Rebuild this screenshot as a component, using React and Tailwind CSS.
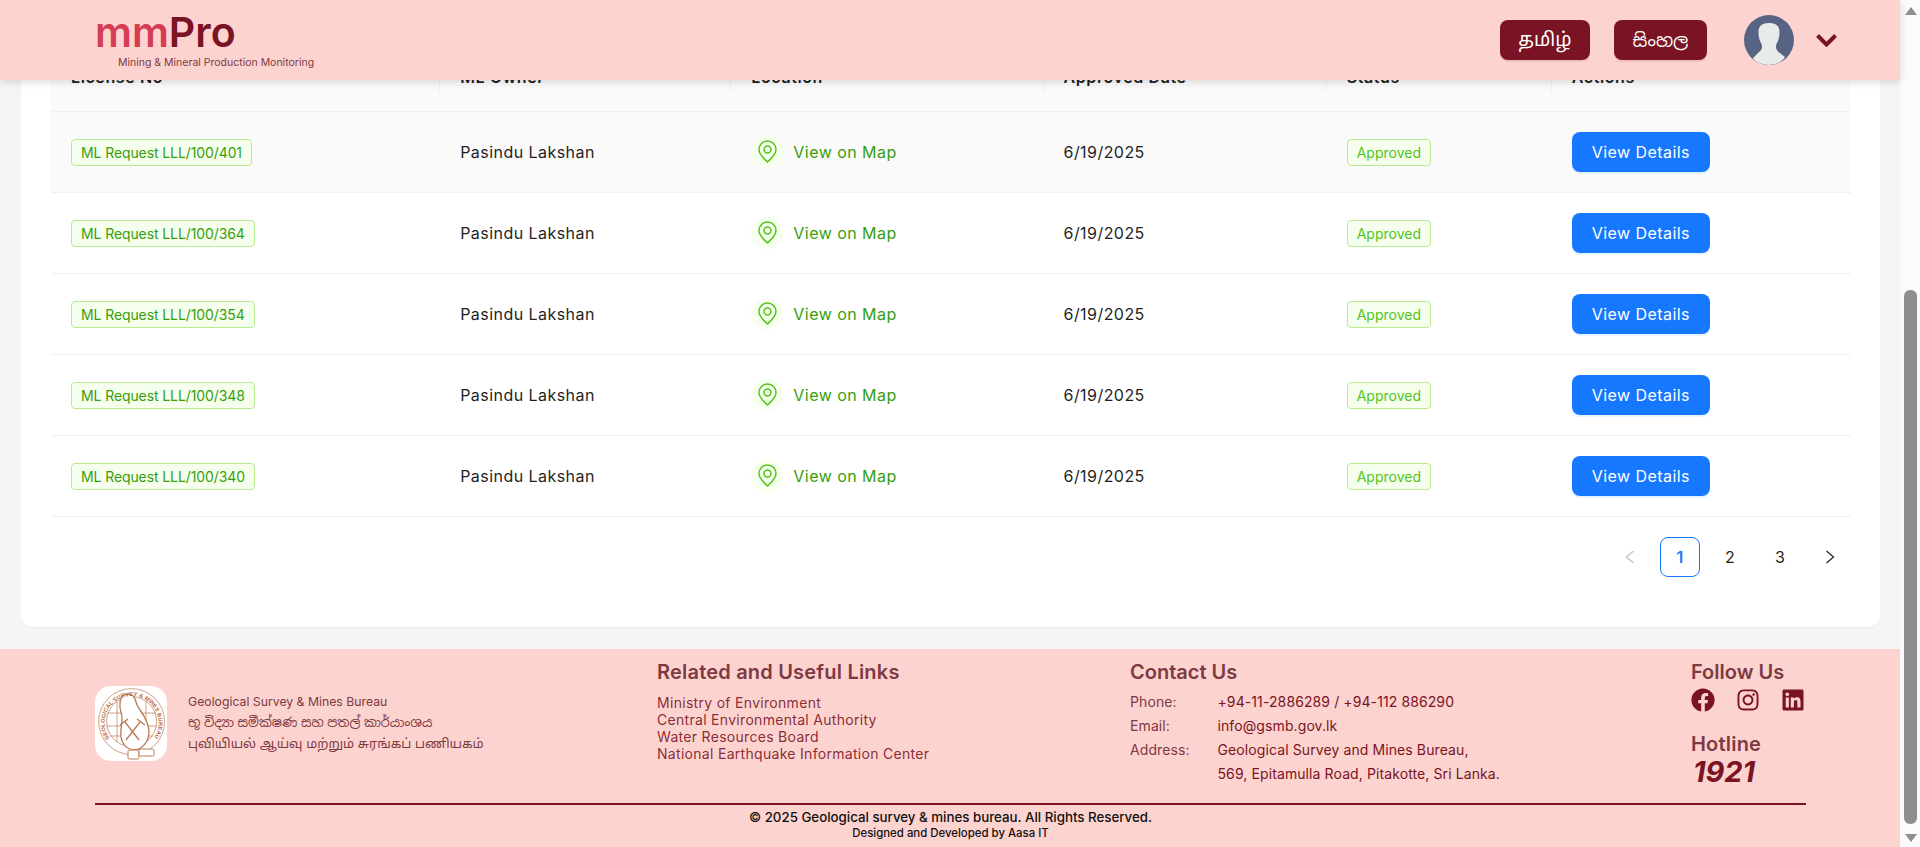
import React from "react";
import { FaFacebook, FaLinkedin, FaInstagram } from "react-icons/fa";

const rows = ["401", "364", "354", "348", "340"];
const heads = ["License No", "ML Owner", "Location", "Approved Date", "Status", "Actions"];

function Seal() {
  return (
    <svg viewBox="0 0 72 75" className="w-[72px] h-[75px]">
      <defs>
        <path id="ringText" d="M 14.5 52.5 A 27 27 0 1 1 58.7 52.5" fill="none" />
      </defs>
      <g fill="none" stroke="#bb7a55" strokeWidth="0.7">
        <circle cx="36.6" cy="35.6" r="33" />
        <circle cx="36.6" cy="35.6" r="25" />
        <path d="M12.5 27H61M11.5 40H62M15 50H58M22 15V56M31 11V60M51 15V56" />
        <path d="M29 9c4-2 9-1 11 4 1 4 2 7 5 11 5 7 9 14 9 22 0 10-7 17-14 18-8 0-13-6-14-13-1-7 1-12 1-18 0-7-3-10-2-15 0-4 1-7 4-9z" fill="#fff" strokeWidth="1.3" />
        <path d="M30 36l14 18M45 36L31 54M25 39l8-6M50 39l-8-6" strokeWidth="1.3" />
        <rect x="33" y="64" width="11" height="9" rx="1.5" fill="#fff" strokeWidth="1" />
        <rect x="44" y="63" width="15" height="7" rx="1.5" fill="#fff" strokeWidth="1" />
      </g>
      <text fill="#b5693f" fontSize="5.6" fontFamily="'Liberation Sans',sans-serif" fontWeight="700">
        <textPath href="#ringText" textLength="116" lengthAdjust="spacing">GEOLOGICAL SURVEY &amp; MINES BUREAU</textPath>
      </text>
    </svg>
  );
}

function Avatar() {
  return (
    <svg viewBox="0 0 50 50" className="w-[50px] h-[50px] rounded-full">
      <rect width="50" height="50" fill="#566383" />
      <path d="M25 8c7 0 10.500 3 10.500 9 0 6-1.500 9-3 12-1 3-.5 6 2 8l6.500 5c-3 5-9 8-16 8s-13-2-16-7l6-6c3-2 3.500-5 2.500-8-1.500-3-3-6-3-12 0-6 3.500-9 10.500-9z" fill="#e7eceb" />
    </svg>
  );
}

function Pin() {
  return (
    <svg width="19" height="23" viewBox="0 0 19 23" fill="none" stroke="#52c41a" strokeWidth="1.5">
      <path d="M9.500 22C8 20.500 1 15 1 9.500a8.500 8.500 0 0 1 17 0C18 15 11 20.500 9.500 22z" strokeLinejoin="round" />
      <circle cx="9.500" cy="9.500" r="3.500" />
    </svg>
  );
}

function Tag({ children, light }) {
  return (
    <span className={`inline-flex items-center h-[27px] px-[9px] rounded-[4px] border border-[#b7eb8f] bg-[#f6ffed] text-[14px] leading-none whitespace-nowrap ${light ? "tracking-normal text-[#52c41a]" : "tracking-[-0.1px] text-[#389e0d]"}`}>
      {children}
    </span>
  );
}

function Scrollbar() {
  return (
    <div className="w-5 shrink-0 h-full bg-[#fbfbfb] flex flex-col pl-[4px] pr-[3px]">
      <div className="h-[22px] flex items-center justify-center">
        <div className="w-0 h-0 border-x-[6.500px] border-x-transparent border-b-[8px] border-b-[#8e8e8e]" />
      </div>
      <div className="mt-[268px] h-[534px] bg-[#8e8e8e] rounded-[6px]" />
      <div className="flex-1 flex items-end justify-center pb-[5px]">
        <div className="w-0 h-0 border-x-[6.500px] border-x-transparent border-t-[8px] border-t-[#8e8e8e]" />
      </div>
    </div>
  );
}

const sans = "font-['Inter','Noto_Sans_Tamil','Noto_Sans_Sinhala',sans-serif]";

export default function App() {
  return (
    <div className={`flex h-screen w-full overflow-hidden bg-[#f5f5f5] ${sans}`}>
      <div className="relative flex-1 min-w-0 h-full flex flex-col">
        <header className="absolute top-0 inset-x-0 z-10 h-20 bg-[#fdd3cf] shadow-[0_2px_8px_rgba(0,0,0,0.15)] flex items-center pl-[95px] pr-[63px]">
          <div className="flex flex-col self-start pt-[12px]">
            <div className="text-[41px] leading-[40px] font-semibold">
              <span className="text-[#d63d55]">mm</span><span className="text-[#7a1324]">Pro</span>
            </div>
            <div className="ml-[23px] mt-[4px] text-[10.500px] leading-[14px] text-[#7d3a44] whitespace-nowrap">Mining &amp; Mineral Production Monitoring</div>
          </div>
          <div className="ml-auto flex items-center">
            <button className="w-[90px] h-10 rounded-lg bg-[#7a1324] text-white text-[19px] shadow-[0_2px_0_rgba(122,19,36,0.1)]">தமிழ்</button>
            <button className="ml-6 w-[93px] h-10 rounded-lg bg-[#7a1324] text-white text-[18px] shadow-[0_2px_0_rgba(122,19,36,0.1)]">සිංහල</button>
            <div className="ml-[37px]"><Avatar /></div>
            <svg width="21" height="13" viewBox="0 0 21 13" fill="none" stroke="#7a1324" strokeWidth="4" className="ml-[22px]">
              <path d="M1.500 1.500l9 9 9-9" />
            </svg>
          </div>
        </header>

        <main className="pl-[21px] pr-5 h-[649px] shrink-0">
          <div className="h-[627px] bg-white rounded-b-[12px] pt-[41px] pl-[30px] pr-[29px] shadow-[0_1px_2px_rgba(0,0,0,0.04)]">
            <table className="w-full table-fixed border-collapse text-[16px] tracking-[0.45px] text-[#1f1f1f]">
              <colgroup>
                <col className="w-[389px]" /><col className="w-[291px]" /><col className="w-[312px]" /><col className="w-[283px]" /><col className="w-[225px]" /><col className="w-[299px]" />
              </colgroup>
              <thead>
                <tr className="h-[70px] bg-[#fafafa] border-b border-[#f0f0f0]">
                  {heads.map((h, i) => (
                    <th key={h} className="relative px-5 pt-[3px] text-left font-semibold tracking-[0.6px]">
                      {h}
                      {i < 5 && <span className="absolute right-0 top-[19px] h-[32px] w-px bg-[#f0f0f0]" />}
                    </th>
                  ))}
                </tr>
              </thead>
              <tbody>
                {rows.map((r, i) => (
                  <tr key={r} className={`h-[81px] border-b border-[#f0f0f0] ${i === 0 ? "bg-[#fafafa]" : ""}`}>
                    <td className="px-5 pt-[2px]"><Tag>ML Request LLL/100/{r}</Tag></td>
                    <td className="px-5">Pasindu Lakshan</td>
                    <td className="px-5">
                      <div className="flex items-center gap-[10px] text-[#389e0d]">
                        <span className="w-8 h-8 rounded-full bg-[#f6ffed] flex items-center justify-center"><Pin /></span>
                        View on Map
                      </div>
                    </td>
                    <td className="px-5">6/19/2025</td>
                    <td className="px-5 pt-[2px]"><Tag light>Approved</Tag></td>
                    <td className="px-5">
                      <button className="w-[138px] h-10 rounded-lg bg-[#1677ff] text-white shadow-[0_2px_0_rgba(5,145,255,0.1)]">View Details</button>
                    </td>
                  </tr>
                ))}
              </tbody>
            </table>
            <nav className="mt-5 mr-px flex justify-end gap-[10px] text-[16px] text-[#1f1f1f]">
              <span className="w-10 h-10 flex items-center justify-center">
                <svg width="10" height="14" viewBox="0 0 10 14" fill="none" stroke="#c4c4c4" strokeWidth="1.400"><path d="M8.500 1L1.500 7l7 6" /></svg>
              </span>
              <span className="w-10 h-10 flex items-center justify-center rounded-lg border border-[#1677ff] text-[#1677ff] font-semibold">1</span>
              <span className="w-10 h-10 flex items-center justify-center">2</span>
              <span className="w-10 h-10 flex items-center justify-center">3</span>
              <span className="w-10 h-10 flex items-center justify-center">
                <svg width="10" height="14" viewBox="0 0 10 14" fill="none" stroke="#333" strokeWidth="1.400"><path d="M1.500 1l7 6-7 6" /></svg>
              </span>
            </nav>
          </div>
        </main>

        <footer className="flex-1 bg-[#fdd3cf] pl-[95px] pr-[94px] flex flex-col">
          <div className="h-[156px] flex shrink-0 border-b-2 border-[#7a1324]">
            <div className="w-[562px] shrink-0 flex items-start pt-[37px]">
              <div className="w-[72px] h-[75px] bg-white rounded-[16px] flex items-center justify-center overflow-hidden"><Seal /></div>
              <div className="ml-[21px] pt-[5px] text-[#7d3a44]">
                <div className="text-[12.250px] leading-[21px]">Geological Survey &amp; Mines Bureau</div>
                <div className="text-[12.800px] leading-[21px]">භූ විද්‍යා සමීක්ෂණ සහ පතල් කාර්යාංශය</div>
                <div className="text-[12.900px] leading-[21px]">புவியியல் ஆய்வு மற்றும் சுரங்கப் பணியகம்</div>
              </div>
            </div>
            <div className="w-[473px] shrink-0 pt-[10px]">
              <h3 className="text-[20px] leading-[26px] font-semibold tracking-[0.2px] text-[#7d3a44]">Related and Useful Links</h3>
              <ul className="mt-[9px] text-[14px] leading-[17px] tracking-[0.3px] text-[#7a1324]/90">
                <li>Ministry of Environment</li>
                <li>Central Environmental Authority</li>
                <li>Water Resources Board</li>
                <li>National Earthquake Information Center</li>
              </ul>
            </div>
            <div className="w-[561px] shrink-0 pt-[10px]">
              <h3 className="text-[20px] leading-[26px] font-semibold text-[#7d3a44]">Contact Us</h3>
              <dl className="mt-[5px] grid grid-cols-[87.500px_1fr] text-[14px] leading-[24px] tracking-[0.1px]">
                <dt className="text-[#7d3a44]">Phone:</dt><dd className="text-[#7a1324]">+94-11-2886289 / +94-112 886290</dd>
                <dt className="text-[#7d3a44]">Email:</dt><dd className="text-[#7a1324]">info@gsmb.gov.lk</dd>
                <dt className="text-[#7d3a44]">Address:</dt><dd className="text-[#7a1324]">Geological Survey and Mines Bureau,<br />569, Epitamulla Road, Pitakotte, Sri Lanka.</dd>
              </dl>
            </div>
            <div className="flex-1 pt-[10px] min-w-0">
              <h3 className="text-[20px] leading-[26px] font-semibold text-[#7d3a44]">Follow Us</h3>
              <div className="mt-[3px] flex gap-[21px] text-[#7a1324]">
                <FaFacebook className="w-6 h-6" /><FaInstagram className="w-6 h-6" /><FaLinkedin className="w-6 h-6" />
              </div>
              <h3 className="mt-[19px] text-[20px] leading-[26px] font-semibold tracking-[0.2px] text-[#7d3a44]">Hotline</h3>
              <div className="pl-[2px] text-[29px] leading-[30px] font-bold italic text-[#7a1324]">1921</div>
            </div>
          </div>
          <div className="pt-[3px] text-center text-[#111]">
            <div className="text-[13.300px] leading-[19px] font-medium">© 2025 Geological survey &amp; mines bureau. All Rights Reserved.</div>
            <div className="text-[11.400px] leading-[13px] font-medium">Designed and Developed by Aasa IT</div>
          </div>
        </footer>
      </div>
      <Scrollbar />
    </div>
  );
}
